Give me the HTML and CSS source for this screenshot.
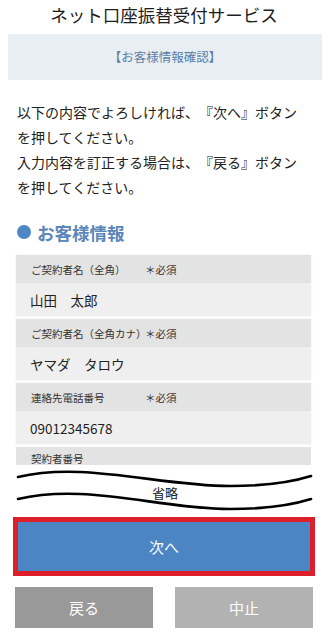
FILE: index.html
```html
<!DOCTYPE html>
<html lang="ja">
<head>
<meta charset="utf-8">
<link rel="stylesheet" href="styles.css">
</head>
<body>
<div class="page">
  <h1 class="title">ネット口座振替受付サービス</h1>
  <div class="banner">【お客様情報確認】</div>
  <p class="intro">以下の内容でよろしければ、『次へ』ボタンを押してください。<br>入力内容を訂正する場合は、『戻る』ボタンを押してください。</p>
  <h2 class="section"><span class="dot"></span>お客様情報</h2>
  <div class="fields">
    <div class="field">
      <div class="label"><span class="name">ご契約者名（全角）</span><span class="req">＊必須</span></div>
      <div class="value">山田　太郎</div>
    </div>
    <div class="field">
      <div class="label"><span class="name">ご契約者名（全角カナ）</span><span class="req">＊必須</span></div>
      <div class="value">ヤマダ　タロウ</div>
    </div>
    <div class="field">
      <div class="label"><span class="name">連絡先電話番号</span><span class="req">＊必須</span></div>
      <div class="value">09012345678</div>
    </div>
    <div class="field cut">
      <div class="label"><span class="name">契約者番号</span></div>
    </div>
  </div>
  <div class="omit">
    <svg class="waves" width="328" height="52" viewBox="0 0 328 52">
      <path d="M18 12 C 35 8, 55 6, 80 7 C 130 9, 180 21, 230 21 C 265 21, 292 17, 311 11" fill="none" stroke="#000" stroke-width="2.6" stroke-linecap="round"/>
      <path d="M18 34 C 35 30, 55 28, 80 29 C 130 31, 180 44, 230 44 C 265 44, 292 40, 311 34" fill="none" stroke="#000" stroke-width="2.6" stroke-linecap="round"/>
    </svg>
    <span class="omit-text">省略</span>
  </div>
  <div class="next-wrap">
    <div class="btn next">次へ</div>
  </div>
  <div class="sub-buttons">
    <div class="btn back">戻る</div>
    <div class="btn cancel">中止</div>
  </div>
</div>
</body>
</html>
```
FILE: styles.css
```css
html, body {
  margin: 0;
  padding: 0;
  background: #ffffff;
}
body {
  font-family: "Noto Sans CJK JP", "Noto Sans", sans-serif;
  color: #222222;
  text-spacing-trim: space-all;
}
.page {
  width: 328px;
  height: 634px;
  overflow: hidden;
}
.title {
  margin: 0;
  height: 34px;
  line-height: 30px;
  font-size: 17.5px;
  font-weight: 400;
  text-align: center;
  color: #1e1e1e;
}
.banner {
  margin: 0 6px 0 8px;
  height: 46px;
  line-height: 46px;
  background: #e9eef3;
  color: #5b7fa6;
  font-size: 12.5px;
  text-align: center;
}
.intro {
  margin: 20px 0 0 17px;
  width: 286px;
  font-size: 14px;
  line-height: 25px;
  color: #222222;
  text-spacing-trim: space-all;
}
.section {
  margin: 20px 0 0 17px;
  height: 24px;
  display: flex;
  align-items: center;
  gap: 6px;
  font-size: 17.5px;
  font-weight: 700;
  color: #5a86b9;
}
.dot {
  width: 14px;
  height: 14px;
  border-radius: 50%;
  background: #4f86c6;
}
.fields {
  margin: 11px 0 0 16px;
  width: 295px;
  display: flex;
  flex-direction: column;
  gap: 3px;
}
.field {
  box-shadow: 0 0 2px rgba(0, 0, 0, 0.08);
}
.label {
  height: 28px;
  display: flex;
  align-items: center;
  padding-left: 15px;
  background: #e3e3e3;
  font-size: 10.5px;
  color: #333333;
}
.name {
  width: 114px;
  white-space: nowrap;
}
.value {
  height: 33px;
  display: flex;
  align-items: center;
  padding-left: 14px;
  background: #efefef;
  font-size: 13.5px;
  color: #222222;
}
.cut {
  height: 18px;
  overflow: hidden;
  box-shadow: none;
}
.cut .label {
  align-items: flex-start;
  padding-top: 5px;
  line-height: 14px;
}
.omit {
  position: relative;
  height: 52px;
}
.waves {
  display: block;
}
.omit-text {
  position: absolute;
  left: 0;
  right: 0;
  top: 19px;
  text-align: center;
  font-size: 13px;
  line-height: 18px;
  color: #222222;
  padding-left: 2px;
}
.next-wrap {
  margin: 0 0 0 13px;
  width: 292px;
  border: 5px solid #dc1f2b;
}
.btn {
  display: flex;
  align-items: center;
  justify-content: center;
  color: #ffffff;
  font-size: 15px;
}
.next {
  height: 49px;
  background: #4b85c4;
}
.sub-buttons {
  margin: 11px 0 0 15px;
  width: 298px;
  display: flex;
  justify-content: space-between;
}
.back {
  width: 138px;
  height: 41px;
  background: #999999;
}
.cancel {
  width: 138px;
  height: 41px;
  background: #b2b2b2;
}
```
